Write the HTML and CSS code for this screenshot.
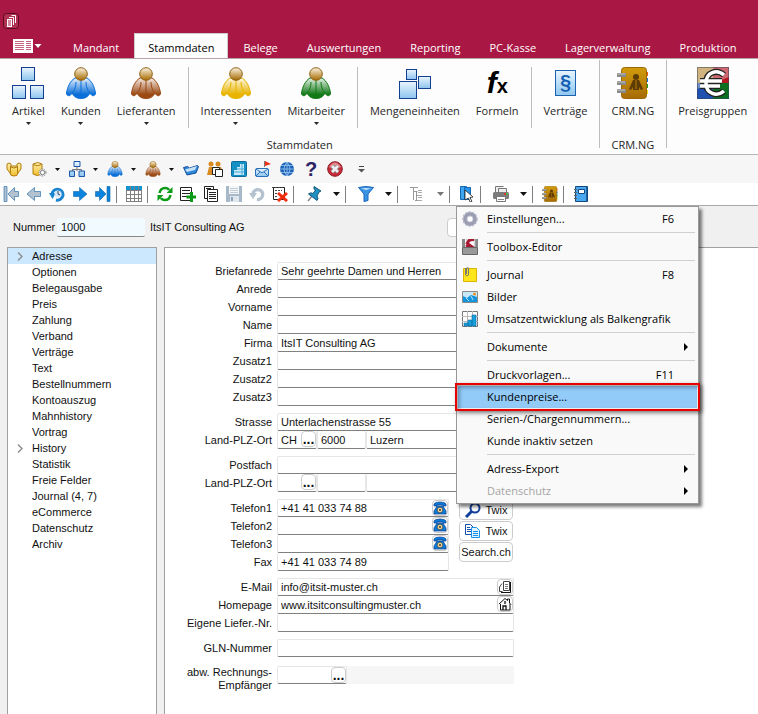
FILE: index.html
```html
<!DOCTYPE html>
<html lang="de">
<head>
  <meta charset="UTF-8">
  <meta name="viewport" content="width=device-width, initial-scale=1">
  <title>Kunden</title>
  <link rel="stylesheet" href="styles.css">
</head>
<body>
<!-- icon library -->
<svg class="defs" width="0" height="0" aria-hidden="true">
  <defs>
    <linearGradient id="shine" x1="0" y1="0" x2="0" y2="1">
      <stop offset="0" stop-color="#fff" stop-opacity=".9"/>
      <stop offset=".8" stop-color="#fff" stop-opacity="0"/>
    </linearGradient>
    <linearGradient id="sky" x1="0" y1="0" x2="0" y2="1">
      <stop offset="0" stop-color="#eaf5fe"/>
      <stop offset="1" stop-color="#8cc4ee"/>
    </linearGradient>
    <linearGradient id="head" x1="0" y1="0" x2="0" y2="1">
      <stop offset="0" stop-color="#fdf4e2"/>
      <stop offset="1" stop-color="#a66a00"/>
    </linearGradient>
    <linearGradient id="gold" x1="0" y1="0" x2="0" y2="1">
      <stop offset="0" stop-color="#fff3b0"/>
      <stop offset="1" stop-color="#f2bd27"/>
    </linearGradient>
    <linearGradient id="brown" x1="0" y1="0" x2="0" y2="1">
      <stop offset="0" stop-color="#d19b0c"/>
      <stop offset="1" stop-color="#a66b05"/>
    </linearGradient>
  </defs>
  <symbol id="i-person" viewBox="0 0 32 32">
    <path d="M10 11C5 14 2.500 20 1.500 26c0 3 3 3.500 4.500 1.500l1-1.500c2 4 5 5.500 9 5.500s7-1.500 9-5.500l1 1.500c1.500 2 4.500 1.500 4.500-1.500-1-6-3.500-12-8.500-15z" fill="currentColor"/>
    <path d="M10 11C5 14 2.500 20 1.500 26c0 3 3 3.500 4.500 1.500l1-1.500c2 4 5 5.500 9 5.500s7-1.500 9-5.500l1 1.500c1.500 2 4.500 1.500 4.500-1.500-1-6-3.500-12-8.500-15z" fill="url(#shine)" stroke="currentColor"/>
    <path d="M11 15c0 4-1 8-4 11M21 15c0 4 1 8 4 11M16 13v14" fill="none" stroke="currentColor"/>
    <circle cx="16" cy="7" r="6.300" fill="url(#head)" stroke="#8f6115"/>
  </symbol>
  <symbol id="i-boxes" viewBox="0 0 32 32">
    <g fill="url(#sky)" stroke="#123f8f"><rect x="9.500" y=".5" width="13" height="13"/><rect x=".5" y="18.500" width="13" height="13"/><rect x="18.500" y="18.500" width="13" height="13"/></g>
  </symbol>
  <symbol id="i-contacts" viewBox="0 0 32 32">
    <path d="M28 5h3v4h-3z" fill="#f25a10"/><path d="M28 11h3v4h-3z" fill="#1470e0"/><path d="M28 17h3v4h-3z" fill="#1aa11a"/><path d="M28 23h3v4h-3z" fill="#f0e010"/>
    <rect x="4.500" y=".5" width="25" height="31" rx="3" fill="url(#brown)" stroke="#9a6606"/>
    <g fill="#5e3c06"><circle cx="19" cy="10" r="3"/><path d="M16 13h6l4 9-2 1-2-3v3h-6v-3l-2 3-2-1z"/></g>
    <path d="M18.500 13v9h1v-9z" fill="#b87d08"/>
    <path d="M0 8h9M0 16h9M0 24h9" stroke="#8a8a8a" stroke-width="4"/><path d="M0 7h8M0 15h8M0 23h8" stroke="#c4c4c4"/>
  </symbol>
  <symbol id="i-arrow" viewBox="0 0 16 16"><path d="M1.500 5.500h6V1.500L15 8l-7.500 6.500v-4h-6z" fill="currentColor" stroke="#1566a8" stroke-opacity=".6"/></symbol>
  <symbol id="i-last" viewBox="0 0 16 16"><path d="M.5 5.500h4V1.500L11 8l-6.500 6.500v-4h-4zM12 .5h3v15h-3z" fill="currentColor" stroke="#1566a8" stroke-opacity=".6"/></symbol>
  <symbol id="i-undo" viewBox="0 0 16 16"><path d="M4 10a5 5 0 1 1 4 3.500" fill="none" stroke="currentColor" stroke-width="3.200"/><path d="M0 7h8l-4 6z" fill="currentColor"/></symbol>
  <symbol id="i-phone" viewBox="0 0 14 14">
    <path d="M1 5V3q1-2 6-2t6 2v2h-3V4H4v1z" fill="#0a7bd8" stroke="#123f8f" stroke-width=".7"/>
    <path d="M4 5h6l3 5v3H1v-3z" fill="#0a7bd8" stroke="#123f8f" stroke-width=".7"/>
    <circle cx="7" cy="9" r="2.800" fill="#f5d79a" stroke="#3b3b3b" stroke-width=".7"/><circle cx="7" cy="9" r="1" fill="#333"/>
  </symbol>
  <symbol id="i-caret" viewBox="0 0 7 4"><path d="M0 0h7L3.500 4z" fill="currentColor"/></symbol>
  <symbol id="i-next" viewBox="0 0 4 8"><path d="M0 0v8l4-4z" fill="currentColor"/></symbol>
  <symbol id="i-chevron" viewBox="0 0 6 9"><path d="M1 .5l4 4-4 4" fill="none" stroke="#909090" stroke-width="1.500"/></symbol>
</svg>

<div class="titlebar">
  <svg class="app-logo" viewBox="0 0 16 16" aria-hidden="true">
    <rect x=".5" y=".5" width="15" height="15" rx="3" fill="#b03052" stroke="#5c0920"/>
    <path d="M4 6h5v8H4z" fill="#fff"/><path d="M5 8h3M5 10h3M5 12h3" stroke="#a91845"/>
    <path d="M6 4.500h4.500V12M8.500 2.500h4V10" fill="none" stroke="#fff"/>
  </svg>
</div>

<nav class="tabs">
  <button class="file-menu" aria-label="Menü">
    <svg width="20" height="14" viewBox="0 0 20 14"><path d="M0 0h20v14H0z" fill="#fff"/><path d="M2 2.500h9M2 4.500h9M2 6.500h9M2 8.500h9M2 10.500h9M13 2.500h5M13 4.500h5M13 6.500h5M13 8.500h5M13 10.500h5" stroke="#c46482"/></svg>
    <svg width="8" height="4"><use href="#i-caret"/></svg>
  </button>
  <a href="#" class="tab">Mandant</a>
  <a href="#" class="tab active">Stammdaten</a>
  <a href="#" class="tab">Belege</a>
  <a href="#" class="tab">Auswertungen</a>
  <a href="#" class="tab">Reporting</a>
  <a href="#" class="tab">PC-Kasse</a>
  <a href="#" class="tab">Lagerverwaltung</a>
  <a href="#" class="tab">Produktion</a>
</nav>

<div class="ribbon">
  <section class="group">
    <div class="items">
      <button class="item"><svg class="big"><use href="#i-boxes"/></svg>Artikel<svg class="drop"><use href="#i-caret"/></svg></button>
      <button class="item"><svg class="big blue"><use href="#i-person"/></svg>Kunden<svg class="drop"><use href="#i-caret"/></svg></button>
      <button class="item"><svg class="big red"><use href="#i-person"/></svg>Lieferanten<svg class="drop"><use href="#i-caret"/></svg></button>
      <span class="line"></span>
      <button class="item"><svg class="big yellow"><use href="#i-person"/></svg>Interessenten<svg class="drop"><use href="#i-caret"/></svg></button>
      <button class="item"><svg class="big green"><use href="#i-person"/></svg>Mitarbeiter<svg class="drop"><use href="#i-caret"/></svg></button>
      <span class="line"></span>
      <button class="item">
        <svg class="big" viewBox="0 0 32 32"><g fill="url(#sky)" stroke="#123f8f"><rect x="7.500" y="2.500" width="10" height="10"/><rect x="19.500" y="9.500" width="12" height="12"/><rect x=".5" y="14.500" width="17" height="17"/></g></svg>
        Mengeneinheiten
      </button>
      <button class="item"><span class="big fx"><i>f</i><small>x</small></span>Formeln</button>
      <span class="line"></span>
      <button class="item"><span class="big"><span class="paragraph">§</span></span>Verträge</button>
    </div>
    <h2>Stammdaten</h2>
  </section>
  <section class="group">
    <div class="items">
      <button class="item"><svg class="big"><use href="#i-contacts"/></svg>CRM.NG</button>
    </div>
    <h2>CRM.NG</h2>
  </section>
  <section class="group">
    <div class="items">
      <button class="item">
        <svg class="big" viewBox="0 0 32 32">
          <path d="M0 0h16v16H0z" fill="#b88a3c"/><path d="M16 0h16v16H16z" fill="#b41824"/><path d="M0 16h16v16H0z" fill="#2050b0"/><path d="M16 16h16v16H16z" fill="#0a7020"/>
          <path d="M0 0h32v10L0 22z" fill="#fff" opacity=".35"/><path d="M.5.5h31v31H.5z" fill="none" stroke="#345" stroke-opacity=".5"/>
          <g fill="none" stroke="#222" stroke-width="6"><path d="M27 8C20 2 9 5 9 16s11 14 18 8M3 14h22M3 19h20"/></g>
          <g fill="none" stroke="#fff" stroke-width="3.500"><path d="M27 8C20 2 9 5 9 16s11 14 18 8M3 14h22M3 19h20"/></g>
        </svg>
        Preisgruppen
      </button>
    </div>
  </section>
</div>

<div class="quickbar">
  <button aria-label="Offene Posten"><svg viewBox="0 0 16 16"><path d="M1 3q2-2 4 0v2h6V3q2-2 4 0v5l-3 4q0 3-4 3t-4-3L1 8z" fill="url(#gold)" stroke="#b07c10"/><path d="M4.500 5v7M11.500 5v7M5 6q3 2 6 0" fill="none" stroke="#b07c10"/></svg></button>
  <button class="split" aria-label="Datenbank"><svg viewBox="0 0 16 16"><path d="M2 3v10q4 3 9 0V3q-4-3-9 0z" fill="url(#gold)" stroke="#b07c10"/><path d="M2 3.500q4 2.500 9 0" fill="none" stroke="#b07c10"/><circle cx="11.500" cy="11.500" r="3.500" fill="#fff" stroke="#777" stroke-dasharray="1.500 1"/><circle cx="11.500" cy="11.500" r="2.200" fill="#fff" stroke="#777"/></svg><svg class="caret small"><use href="#i-caret"/></svg></button>
  <button class="split" aria-label="Artikel"><svg viewBox="0 0 16 16"><path d="M8 6v4M3.500 10V8.500h9V10" fill="none" stroke="#777"/><g fill="url(#sky)" stroke="#1b56a8"><path d="M5 .5h6v5H5zM.5 10h5v5.500h-5zM10 10h5.500v5.500H10z"/></g></svg><svg class="caret small"><use href="#i-caret"/></svg></button>
  <button class="split" aria-label="Kunden"><svg class="blue"><use href="#i-person"/></svg><svg class="caret small"><use href="#i-caret"/></svg></button>
  <button class="split" aria-label="Lieferanten"><svg class="red"><use href="#i-person"/></svg><svg class="caret small"><use href="#i-caret"/></svg></button>
  <button class="wide" aria-label="Öffnen"><svg viewBox="0 0 16 16"><path d="M.5 6.500l4-1 2 1.500 8-2.500 1 1-2.500 6.500-9 2z" fill="#2b88d8" stroke="#174f9c"/><path d="M2 8.500l12-3.500-2 4-8 2z" fill="#c6e2f8"/></svg></button>
  <button class="wide" aria-label="Personen kopieren"><svg viewBox="0 0 16 16"><g fill="#d88a20"><circle cx="4" cy="3" r="2.500"/><circle cx="11" cy="3" r="2.500"/><path d="M0 14l2-8h4l2 3 2-3h4l2 5v3z"/></g><path d="M5.500 6.500h7v7h-7z" fill="#fff" stroke="#222"/><path d="M8.500 8.500h7v7h-7z" fill="#fff" stroke="#222"/></svg></button>
  <button class="wide" aria-label="Auswertung"><svg viewBox="0 0 16 16"><rect x=".5" y=".5" width="15" height="15" rx="1" fill="#1490c4" stroke="#0d6c9c"/><path d="M3 9h3v5H3zM6 6h3v8H6zM9 3h4v11H9z" fill="#c8eaf8"/><path d="M3 11h10M6 8h7M11 3v11" stroke="#48a9d4"/></svg></button>
  <button class="wide" aria-label="Nachricht"><svg viewBox="0 0 16 16"><path d="M9.500 0v6" stroke="#777"/><path d="M10 0l6 3-6 2z" fill="#f03018"/><rect x=".5" y="7.500" width="13" height="8" rx="1.500" fill="url(#sky)" stroke="#2870bc"/><path d="M1 8l6 4 6-4M1 15l4-4M13 15l-4-4" fill="none" stroke="#2870bc"/></svg></button>
  <button class="wide" aria-label="Internet"><svg viewBox="0 0 16 16"><circle cx="8" cy="8" r="7" fill="#1c62b8"/><path d="M1 8h14M2 4.500h12M2 11.500h12M8 1v14M8 1Q2 8 8 15M8 1q6 7 0 14" fill="none" stroke="#9cc8f0" stroke-width=".8"/></svg></button>
  <button class="wide help" aria-label="Hilfe">?</button>
  <button class="wide" aria-label="Schliessen"><svg viewBox="0 0 16 16"><circle cx="8" cy="8" r="7.300" fill="#c82c38" stroke="#8c1822"/><path d="M2 6q6-9 12 0-6 3-12 0" fill="#fff" opacity=".45"/><path d="M5 5l6 6M11 5l-6 6" stroke="#888" stroke-width="4"/><path d="M5 5l6 6M11 5l-6 6" stroke="#eee" stroke-width="2.500"/></svg></button>
  <button class="more" aria-label="Anpassen"><svg viewBox="0 0 7 7"><path d="M1 .5h5" stroke="#444"/><path d="M0 3h7L3.500 6.500z" fill="#555"/></svg></button>
</div>

<div class="toolbar">
  <button class="off flip" aria-label="Erster"><svg><use href="#i-last"/></svg></button>
  <button class="off flip" aria-label="Zurück"><svg><use href="#i-arrow"/></svg></button>
  <button class="nav" aria-label="Verlauf"><svg viewBox="0 0 16 16"><path d="M3 9a5.500 5.500 0 1 1 4 5" fill="none" stroke="#1a84d0" stroke-width="3"/><path d="M0 7h7l-3.500 6z" fill="#1a84d0"/><circle cx="9" cy="8" r="3.500" fill="#d8e8f4"/><path d="M9 5v3l2 1" fill="none" stroke="#246"/></svg></button>
  <button class="nav" aria-label="Vor"><svg><use href="#i-arrow"/></svg></button>
  <button class="nav" aria-label="Letzter"><svg><use href="#i-last"/></svg></button>
  <span class="line"></span>
  <button aria-label="Liste"><svg viewBox="0 0 16 16"><path d="M.5.5h15v15H.5z" fill="#fff" stroke="#777"/><path d="M0 0h16v4H0z" fill="#1493d0"/><path d="M.5 4v12M4.500 0v16M8.500 0v16M12.500 0v16M15.500 4v12M0 4.500h16M0 8.500h16M0 12.500h16M0 15.500h16" stroke="#808080"/></svg></button>
  <span class="line"></span>
  <button aria-label="Aktualisieren"><svg viewBox="0 0 16 16"><path d="M2.500 7q1-5 5.500-5 3 0 4 2M13.500 9q-1 5-5.500 5-3 0-4-2" fill="none" stroke="#0b9b16" stroke-width="2.500"/><path d="M15.500 1v6h-6zM.5 15V9h6z" fill="#0b9b16"/></svg></button>
  <button aria-label="Neu"><svg viewBox="0 0 16 16"><path d="M.5 1.500h11v13H.5z" fill="#fff" stroke="#222"/><path d="M2 4.500h8M2 7.500h8M2 10.500h5" stroke="#222"/><path d="M11.500 6v10M6.500 11h9.500" stroke="#0b9b16" stroke-width="3"/></svg></button>
  <button aria-label="Kopieren"><svg viewBox="0 0 16 16"><path d="M1.500.5h9v12h-9z" fill="#fff" stroke="#222"/><path d="M4.500 3.500h10v12h-10z" fill="#fff" stroke="#222"/><path d="M6 6.500h7M6 8.500h7M6 10.500h7M6 12.500h7M3 2.500h5" stroke="#222"/></svg></button>
  <button aria-label="Speichern"><svg viewBox="0 0 16 16"><path d="M0 0h16v16H0z" fill="#a7b8c8"/><path d="M3 0h10v8H3z" fill="#f4f6f8"/><path d="M4 2.500h8M4 4.500h8M4 6.500h8" stroke="#c0ccd8"/><path d="M4 10h9v6H4z" fill="#dfe6ec"/><path d="M5 11h2v4H5z" fill="#8ea2b6"/></svg></button>
  <button class="off" aria-label="Rückgängig"><svg><use href="#i-undo"/></svg></button>
  <button aria-label="Löschen"><svg viewBox="0 0 16 16"><path d="M1.500 1.500h11v12h-11z" fill="#fff" stroke="#222"/><path d="M0 1.500h12M3 4.500h7M3 7.500h5M3 10.500h3" stroke="#444" stroke-dasharray="2 1"/><path d="M6 7l9 8M15 7l-9 8" stroke="#f03010" stroke-width="3"/></svg></button>
  <span class="line"></span>
  <button class="split" aria-label="Anheften"><svg viewBox="0 0 16 16"><path d="M6 10l-4 5" stroke="#888" stroke-width="1.500"/><path d="M8 .5l7 4.500-2 1-2 4q2 3 0 4.500L2.500 8q2-2 4.500-.5L9.500 4 8 3z" fill="#1e90c4" stroke="#155878"/></svg><svg class="caret"><use href="#i-caret"/></svg></button>
  <span class="line"></span>
  <button class="split" aria-label="Filter"><svg viewBox="0 0 16 16"><path d="M.5 1.500q7.500-2 15 0L10 8v6.500l-4 1V8z" fill="#3a94e4" stroke="#1b66b8"/><path d="M3 2.500q5-1 10 0L8 4z" fill="#c4e2fa"/></svg><svg class="caret"><use href="#i-caret"/></svg></button>
  <span class="line"></span>
  <button class="split dim" aria-label="Struktur"><svg viewBox="0 0 16 16"><path d="M0 1.500h8M3.500 2v12M3.500 5.500h4M6.500 6v8M5 14.500h5M6.500 9.500h3" fill="none" stroke="#999"/><path d="M8 4.500h4M8 6.500h4M8 9.500h4M8 11.500h4M8 14.500h4" stroke="#aaa"/></svg><svg class="caret"><use href="#i-caret"/></svg></button>
  <span class="line"></span>
  <div class="menu-anchor">
    <button aria-label="Extras" aria-expanded="true"><svg viewBox="0 0 16 16"><path d="M1.500.5h6v13h-6z" fill="#3ea6f0" stroke="#1467b0"/><path d="M5.500 1.500h6v12h-6z" fill="#2a96ec" stroke="#1467b0"/><path d="M6 4l8 7-3 .5 2 4-2 .5-1.500-4L6 14z" fill="#fff" stroke="#222" stroke-width=".8"/></svg></button>
    <ul class="menu">
      <li><button><svg viewBox="0 0 16 16"><circle cx="8" cy="8" r="5" fill="none" stroke="#9a9cb2" stroke-width="4"/><circle cx="8" cy="8" r="7" fill="none" stroke="#b4b6c8" stroke-width="1.500" stroke-dasharray="2 1.500"/><circle cx="8" cy="8" r="3" fill="#fff" stroke="#c8cad8"/></svg><span>Einstellungen...</span><kbd>F6</kbd></button></li>
      <li class="rule"></li>
      <li><button><svg viewBox="0 0 16 16"><path d="M0 0h3v8H0zM13 0h3v8h-3z" fill="#888"/><path d="M4 1h9M13 0v8" stroke="#aaa"/><path d="M12 1q-5-1-7 3l7 5M5 4l3-3M4 6l5 4" fill="none" stroke="#a81830" stroke-width="2.500"/><path d="M.5 8.500h15v7H.5z" fill="#999" stroke="#666"/></svg><span>Toolbox-Editor</span></button></li>
      <li class="rule"></li>
      <li><button><svg viewBox="0 0 16 16"><path d="M1.500 1.500h13v13h-13z" fill="#ffe61a" stroke="#dcb400"/><path d="M3.500 1v7q1.500 2 3 0V1q-1-1-2 0v6" fill="none" stroke="#777"/></svg><span>Journal</span><kbd>F8</kbd></button></li>
      <li><button><svg viewBox="0 0 16 16"><path d="M.5 2.500h15v11H.5z" fill="#c8e8fa" stroke="#8a8a8a"/><path d="M1 7l4 2 4-3 6 2v5H1z" fill="#1494dc"/><path d="M4 9l3 3M9 7l2 4" stroke="#b8e0f8"/><circle cx="12.500" cy="5" r="1.500" fill="#f09020"/></svg><span>Bilder</span></button></li>
      <li><button><svg viewBox="0 0 16 16"><path d="M.5.5h15v15H.5z" fill="#fff" stroke="#777"/><path d="M5.500 0v16M10.500 0v16M0 5.500h16M0 10.500h16" stroke="#bbb"/><path d="M2 12h4v3H2zM6 9h4v6H6zM10 4h4v11h-4z" fill="#18a0dc" stroke="#0d6ca8" stroke-width=".6"/></svg><span>Umsatzentwicklung als Balkengrafik</span></button></li>
      <li class="rule"></li>
      <li><button><span>Dokumente</span><svg class="sub"><use href="#i-next"/></svg></button></li>
      <li class="rule"></li>
      <li><button><span>Druckvorlagen...</span><kbd>F11</kbd></button></li>
      <li class="marked"><button><span>Kundenpreise...</span></button></li>
      <li><button><span>Serien-/Chargennummern...</span></button></li>
      <li><button><span>Kunde inaktiv setzen</span></button></li>
      <li class="rule"></li>
      <li><button><span>Adress-Export</span><svg class="sub"><use href="#i-next"/></svg></button></li>
      <li><button disabled><span>Datenschutz</span><svg class="sub"><use href="#i-next"/></svg></button></li>
    </ul>
  </div>
  <span class="line"></span>
  <button class="split" aria-label="Drucken"><svg viewBox="0 0 16 16"><path d="M2.500 7V.5h8M5.500 7V2.500h8V7" fill="#eee" stroke="#777"/><rect y="6" width="16" height="7" rx="1.500" fill="#7c7c7c"/><circle cx="12" cy="8" r="1" fill="#f22"/><circle cx="14" cy="8" r="1" fill="#3c3"/><path d="M3.500 10.500h9v5h-9z" fill="#fff" stroke="#777"/><path d="M5 13.500h6" stroke="#888"/></svg><svg class="caret"><use href="#i-caret"/></svg></button>
  <span class="line"></span>
  <button aria-label="CRM"><svg><use href="#i-contacts"/></svg></button>
  <span class="line"></span>
  <button aria-label="Handbuch"><svg viewBox="0 0 16 16"><path d="M2.500.5h12v15h-12z" fill="#4aa8f0" stroke="#124a80"/><path d="M14 1v14" stroke="#124a80" stroke-width="1.500"/><path d="M5.500 3.500h6v4h-6z" fill="#fff" stroke="#124a80"/><path d="M1 3.500h3M1 6.500h3M1 9.500h3M1 12.500h3" stroke="#666"/></svg></button>
</div>

<header class="record">
  <label for="nummer">Nummer</label>
  <input id="nummer" value="1000">
  <span class="company">ItsIT Consulting AG</span>
  <input class="search" aria-label="Suche">
</header>

<div class="content">
  <ul class="tree">
    <li class="selected"><svg><use href="#i-chevron"/></svg><a href="#">Adresse</a></li>
    <li><a href="#">Optionen</a></li>
    <li><a href="#">Belegausgabe</a></li>
    <li><a href="#">Preis</a></li>
    <li><a href="#">Zahlung</a></li>
    <li><a href="#">Verband</a></li>
    <li><a href="#">Verträge</a></li>
    <li><a href="#">Text</a></li>
    <li><a href="#">Bestellnummern</a></li>
    <li><a href="#">Kontoauszug</a></li>
    <li><a href="#">Mahnhistory</a></li>
    <li><a href="#">Vortrag</a></li>
    <li><svg><use href="#i-chevron"/></svg><a href="#">History</a></li>
    <li><a href="#">Statistik</a></li>
    <li><a href="#">Freie Felder</a></li>
    <li><a href="#">Journal (4, 7)</a></li>
    <li><a href="#">eCommerce</a></li>
    <li><a href="#">Datenschutz</a></li>
    <li><a href="#">Archiv</a></li>
  </ul>

  <form class="address">
    <div class="fields">
      <div class="row"><label for="briefanrede">Briefanrede</label><input id="briefanrede" value="Sehr geehrte Damen und Herren"></div>
      <div class="row"><label for="anrede">Anrede</label><input id="anrede"></div>
      <div class="row"><label for="vorname">Vorname</label><input id="vorname"></div>
      <div class="row"><label for="name">Name</label><input id="name"></div>
      <div class="row"><label for="firma">Firma</label><input id="firma" value="ItsIT Consulting AG"></div>
      <div class="row"><label for="zusatz1">Zusatz1</label><input id="zusatz1"></div>
      <div class="row"><label for="zusatz2">Zusatz2</label><input id="zusatz2"></div>
      <div class="row"><label for="zusatz3">Zusatz3</label><input id="zusatz3"></div>
    </div>
    <div class="fields">
      <div class="row"><label for="strasse">Strasse</label><input id="strasse" value="Unterlachenstrasse 55"></div>
      <div class="row">
        <label for="land1">Land-PLZ-Ort</label>
        <span class="picker country"><input id="land1" value="CH"><button type="button" class="dots">...</button></span>
        <input class="zip" aria-label="PLZ" value="6000"><input aria-label="Ort" value="Luzern">
      </div>
    </div>
    <div class="fields">
      <div class="row"><label for="postfach">Postfach</label><input id="postfach"></div>
      <div class="row">
        <label for="land2">Land-PLZ-Ort</label>
        <span class="picker country"><input id="land2"><button type="button" class="dots">...</button></span>
        <input class="zip" aria-label="PLZ Postfach"><input aria-label="Ort Postfach">
      </div>
    </div>
    <div class="phones">
      <div class="fields">
        <div class="row"><label for="telefon1">Telefon1</label><span class="picker"><input id="telefon1" value="+41 41 033 74 88"><button type="button" aria-label="Anrufen"><svg><use href="#i-phone"/></svg></button></span></div>
        <div class="row"><label for="telefon2">Telefon2</label><span class="picker"><input id="telefon2"><button type="button" aria-label="Anrufen"><svg><use href="#i-phone"/></svg></button></span></div>
        <div class="row"><label for="telefon3">Telefon3</label><span class="picker"><input id="telefon3"><button type="button" aria-label="Anrufen"><svg><use href="#i-phone"/></svg></button></span></div>
        <div class="row"><label for="fax">Fax</label><input id="fax" value="+41 41 033 74 89"></div>
      </div>
      <div class="lookups">
        <button type="button"><svg viewBox="0 0 16 16"><circle cx="10" cy="6" r="4.500" fill="none" stroke="#123f9c" stroke-width="2"/><path d="M7 9l-6 6" stroke="#123f9c" stroke-width="3"/></svg>Twix</button>
        <button type="button"><svg viewBox="0 0 16 16"><path d="M.5 1.500h5l3 3v7h-8z" fill="#fff" stroke="#1450b0"/><path d="M6.500 4.500h5l3 3v7h-8z" fill="#e4f2fc" stroke="#1490f0"/><path d="M2 4.500h3M2 6.500h4M2 8.500h4" stroke="#1450b0"/><path d="M8 8.500h5M8 10.500h5M8 12.500h5" stroke="#1490f0"/></svg>Twix</button>
        <button type="button">Search.ch</button>
      </div>
    </div>
    <div class="fields">
      <div class="row"><label for="email">E-Mail</label><span class="picker"><input id="email" value="info@itsit-muster.ch"><button type="button" aria-label="E-Mail schreiben"><svg viewBox="0 0 14 14"><path d="M5.500 1.500h6v9h-6zM4 3.500L1.500 7v4.500h3" fill="#fff" stroke="#444"/><path d="M7 4.500h3M7 6.500h3M7 8.500h3" stroke="#777"/><path d="M12.500 2v10.500H3" fill="none" stroke="#111"/></svg></button></span></div>
      <div class="row"><label for="homepage">Homepage</label><span class="picker"><input id="homepage" value="www.itsitconsultingmuster.ch"><button type="button" aria-label="Homepage öffnen"><svg viewBox="0 0 14 14"><path d="M1 7l6-5.500 2.500 2V2h2v4L13 7.500M2.500 7v6H12V7" fill="#fff" stroke="#111"/><path d="M5 13V9h3v4M7 4v3" fill="none" stroke="#111" stroke-width="1.300"/></svg></button></span></div>
      <div class="row"><label for="liefer">Eigene Liefer.-Nr.</label><input id="liefer"></div>
    </div>
    <div class="fields">
      <div class="row"><label for="gln">GLN-Nummer</label><input id="gln"></div>
    </div>
    <div class="fields">
      <div class="row invoice">
        <label for="empfaenger">abw. Rechnungs-Empfänger</label>
        <span class="picker receiver"><input id="empfaenger"><button type="button" class="dots">...</button></span>
        <output for="empfaenger"></output>
      </div>
    </div>
  </form>
</div>
</body>
</html>
```

FILE: styles.css
```css
* {
  box-sizing: border-box;
  margin: 0;
  padding: 0;
}

body {
  display: flex;
  flex-direction: column;
  min-height: 100vh;
  overflow-x: hidden;
  background-color: #f0f0f0;
  color: #111;
  font: 11px/16px "Liberation Sans", Arial, sans-serif;
}

ul {
  list-style: none;
}

a {
  color: inherit;
  text-decoration: none;
}

button,
input,
kbd {
  border: 0;
  background: none;
  color: inherit;
  font: inherit;
}

svg {
  display: block;
  flex: none;
}

.defs {
  position: absolute;
}

.blue { color: #0a6fd8; }
.red { color: #9c4a14; }
.yellow { color: #e8b400; }
.green { color: #137a18; }

/* title and tabs */
.titlebar {
  height: 33px;
  padding: 13px 3px 0;
  background-color: #a91845;
}

.app-logo {
  width: 16px;
  height: 16px;
}

.tabs {
  display: flex;
  height: 26px;
  overflow: hidden;
  border-bottom: 1px solid #b4a4aa;
  background-color: #a91845;
  color: #fff;
  font: 11px/29px "Open Sans", sans-serif;
  white-space: nowrap;
  gap: 1px;
}

.file-menu {
  display: flex;
  flex: none;
  align-items: center;
  gap: 1px;
  width: 58px;
  padding-left: 13px;
}

.tab {
  padding: 0 14px;
}

.tab.active {
  padding: 0 13px;
  border: 1px solid #ccc;
  border-bottom: 0;
  background-color: #fdfdfd;
  color: #000;
  line-height: 27px;
}

/* ribbon */
.ribbon {
  display: flex;
  height: 96px;
  overflow: hidden;
  border-bottom: 1px solid #b4b4b4;
  background-color: #fdfdfd;
  color: #262626;
  font: 11px/16px "Open Sans", sans-serif;
}

.group {
  flex: none;
  padding: 8px 4px 0;
  position: relative;
}

.group + .group::before {
  content: "";
  width: 1px;
  height: 88px;
  background-color: #bdbdbd;
  position: absolute;
  top: 1px;
  left: 0;
}

.items {
  display: flex;
  height: 70px;
}

.item {
  display: flex;
  flex-direction: column;
  align-items: center;
  padding: 0 8px;
  white-space: nowrap;
}

.big {
  width: 32px;
  height: 32px;
  margin-bottom: 4px;
}

.drop {
  width: 5px;
  height: 3px;
  margin-top: 3px;
}

.items .line {
  width: 1px;
  height: 61px;
  margin: 0 4px;
  background-color: #bdbdbd;
}

.fx {
  font: bold 30px/32px "Liberation Sans", Arial, sans-serif;
  color: #000;
}

.fx small {
  font-size: 20px;
}

.paragraph {
  display: block;
  width: 21px;
  height: 26px;
  margin: 3px auto;
  border: 1px solid #1c62b0;
  background: linear-gradient(#e6f4fe, #90c8f0);
  color: #1560b4;
  font: bold 20px/22px "Liberation Sans", Arial, sans-serif;
}

.group h2 {
  font-size: 11px;
  font-weight: normal;
  text-align: center;
}

/* quick access bar */
.quickbar {
  display: flex;
  align-items: center;
  height: 28px;
  padding-left: 6px;
  gap: 9px;
  background-color: #f6f6f6;
}

.quickbar button,
.toolbar button {
  display: flex;
  align-items: center;
}

.quickbar svg,
.toolbar svg {
  width: 16px;
  height: 16px;
}

.quickbar .split {
  gap: 8px;
}

.quickbar .caret.small {
  width: 5px;
  height: 3px;
}

.quickbar .wide {
  margin-right: -1px;
}

.quickbar .help {
  justify-content: center;
  width: 16px;
  color: #2a2464;
  font: bold 20px/20px "Liberation Sans", Arial, sans-serif;
}

.quickbar .more {
  margin-left: 7px;
}

.quickbar .more svg {
  width: 7px;
  height: 7px;
}

/* record toolbar */
.toolbar {
  display: flex;
  align-items: center;
  height: 23px;
  padding-left: 3px;
  gap: 7px;
  border-bottom: 1px solid #a8a8a8;
  background-color: #fff;
}

.toolbar .line {
  width: 1px;
  height: 17px;
  margin: 0 2px 0 -2px;
  background-color: #808080;
}

.toolbar .split {
  gap: 11px;
  margin-left: 3px;
}

.toolbar .caret {
  width: 7px;
  height: 4px;
}

.toolbar .nav { color: #0a84dc; }
.toolbar .off { color: #b4c2d0; }
.toolbar .dim { color: #777; }

.flip svg {
  transform: scaleX(-1);
}

/* drop-down menu */
.menu-anchor {
  position: relative;
}

.menu {
  width: 243px;
  padding: 1px;
  border: 1px solid #989898;
  background-color: #f9f9f9;
  box-shadow: 3px 3px 3px rgba(0, 0, 0, .5);
  color: #000;
  font: 11px/22px "Open Sans", sans-serif;
  position: absolute;
  top: 20px;
  left: -3px;
  z-index: 2;
}

.menu button {
  display: flex;
  align-items: center;
  width: 100%;
  height: 22px;
  padding: 0 23px 0 4px;
}

.menu button > svg:first-child {
  margin-right: 9px;
}

.menu button > span:first-child {
  margin-left: 25px;
}

.menu kbd {
  margin-left: auto;
}

.menu .sub {
  width: 4px;
  height: 8px;
  margin-left: auto;
  margin-right: -14px;
}

.menu button:disabled {
  color: #000;
}

.menu button:disabled span {
  color: #a4a4a4;
}

.menu .rule {
  height: 1px;
  margin: 2px 2px 3px 29px;
  background-color: #d0d0d0;
}

.menu .marked {
  background-color: #92caf8;
  position: relative;
}

.menu .marked::after {
  content: "";
  border: 2px solid #e60000;
  box-shadow: 2px 2px 4px rgba(0, 0, 0, .5), inset 2px 2px 4px rgba(0, 0, 0, .4);
  position: absolute;
  inset: -3px;
}

/* record header */
.record {
  display: flex;
  align-items: center;
  height: 41px;
  padding-top: 1px;
  padding-left: 13px;
}

.record label {
  flex: none;
  width: 44px;
}

.record input {
  flex: none;
  width: 88px;
  height: 19px;
  padding: 0 4px;
  border-bottom: 1px solid #888;
  border-radius: 2px;
  background-color: #f0faff;
}

.record .company {
  flex: none;
  width: 302px;
  padding-left: 5px;
}

.record .search {
  border: 1px solid #ccc;
  border-radius: 4px;
  background-color: #fff;
}

/* tree and form */
.content {
  display: flex;
  flex: 1;
  gap: 7px;
  padding-left: 7px;
}

.tree {
  width: 150px;
  border: 1px solid #a0a0a0;
  border-bottom: 0;
  background-color: #fff;
}

.tree li {
  padding-left: 24px;
  position: relative;
}

.tree .selected {
  background-color: #cce8ff;
}

.tree svg {
  width: 6px;
  height: 9px;
  position: absolute;
  top: 4px;
  left: 9px;
}

.address {
  display: flex;
  flex: 1;
  flex-direction: column;
  gap: 7px;
  padding-top: 14px;
  border: 1px solid #a0a0a0;
  border-width: 1px 0 0 1px;
  background-color: #fff;
}

.fields {
  width: 349px;
}

.row {
  display: flex;
  height: 18px;
}

.row label {
  flex: none;
  width: 112px;
  padding-right: 5px;
  line-height: 18px;
  text-align: right;
}

.row > input,
.picker {
  flex: 1;
  min-width: 0;
  border: 1px solid #e6e6e6;
  border-width: 0 1px 1px;
  border-bottom-color: #808080;
  border-radius: 2px;
}

.row input {
  min-width: 0;
  padding: 0 3px;
}

.row:first-child > input,
.row:first-child > .picker {
  border-top-width: 1px;
}

.picker {
  display: flex;
}

.picker input {
  flex: 1;
}

.picker button {
  display: flex;
  align-items: center;
  justify-content: center;
  width: 16px;
  height: 16px;
  border: 1px solid #ccc;
  border-radius: 4px;
}

.picker .dots {
  width: 15px;
  font: bold 14px/14px "Liberation Sans", Arial, sans-serif;
}

.picker svg {
  width: 14px;
  height: 14px;
}

.row .country {
  flex: 0 0 40px;
}

.row .zip {
  flex: 0 0 49px;
}

.phones {
  display: flex;
  gap: 10px;
}

.phones .fields {
  width: 284px;
}

.lookups {
  display: flex;
  flex-direction: column;
  gap: 1px;
  padding-top: 1px;
}

.lookups button {
  display: flex;
  align-items: center;
  justify-content: center;
  gap: 5px;
  width: 54px;
  height: 20px;
  border: 1px solid #ccc;
  border-radius: 4px;
}

.lookups svg {
  width: 16px;
  height: 16px;
}

.row.invoice {
  height: 28px;
  padding-top: 2px;
}

.invoice label {
  line-height: 13px;
}

.row .receiver {
  flex: 0 0 70px;
  height: 18px;
}

.invoice output {
  flex: 1;
  height: 18px;
  background-color: #f6f6f6;
}
```
